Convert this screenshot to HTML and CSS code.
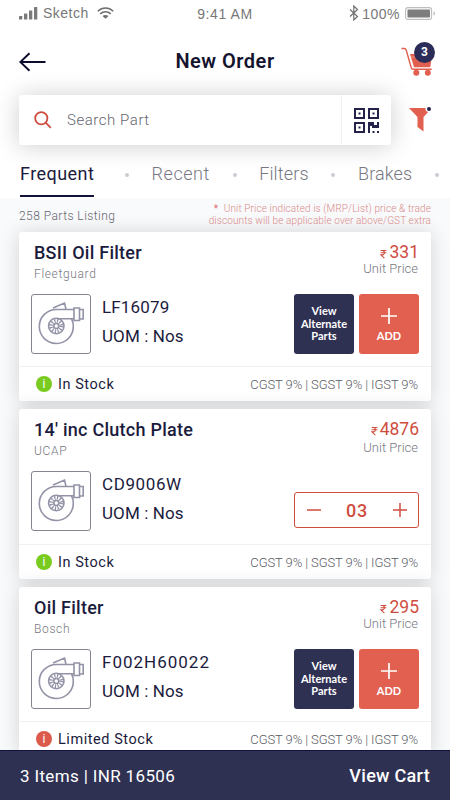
FILE: index.html
```html
<!DOCTYPE html>
<html lang="en">
<head>
  <meta charset="UTF-8">
  <title>New Order</title>
  <link rel="stylesheet" href="styles.css">
</head>
<body>
  <!-- shared icons -->
  <svg class="sprite" width="0" height="0">
    <symbol id="turbo" viewBox="0 0 60 60">
      <g fill="none" stroke="#9293a6" stroke-width="1.6">
        <path d="M43 15.500H25.500A17 17 0 1 0 42.300 32c0-2.600-.500-4.800-1.700-7M26 24.700h17"/>
        <path d="M43 14h5.500v12.500H43zM48.500 15.500h3.700v9.500h-3.700zM22 14l11.500-5 1.500 6.300"/>
        <circle cx="25.300" cy="32" r="7.700"/>
        <circle cx="25.300" cy="32" r="2.500"/>
        <circle cx="25.300" cy="32" r="5" stroke-width="4" stroke-dasharray="1.200 1.418"/>
      </g>
    </symbol>
    <symbol id="plus" viewBox="0 0 16 16">
      <path d="M8 0v16M0 8h16" fill="none" stroke="currentColor" stroke-width="1.700"/>
    </symbol>
    <symbol id="rupee" viewBox="0 0 8 10">
      <path d="M.7 1h6.600M.7 3.500h6.600M1 1h1.500c3.400 0 3.400 5 0 5H1l4 3.700" fill="none" stroke="currentColor" stroke-width="1.200"/>
    </symbol>
  </svg>

  <div class="screen">
    <div class="status-bar">
      <div class="status-left">
        <svg width="19" height="13" viewBox="0 0 19 13" fill="#7b7b7b">
          <rect x="0" y="9" width="3.300" height="3.500" rx=".5"/>
          <rect x="5" y="6.500" width="3.300" height="6" rx=".5"/>
          <rect x="10" y="3.500" width="3.300" height="9" rx=".5"/>
          <rect x="15" y="0" width="3.300" height="12.500" rx=".5"/>
        </svg>
        <span class="carrier">Sketch</span>
        <svg width="17" height="12" viewBox="0 0 17 12">
          <g fill="none" stroke="#6f6f6f" stroke-width="1.600">
            <path d="M.8 4.200c4.400-4.300 11-4.300 15.400 0M3.300 6.900c3-2.900 7.400-2.900 10.400 0"/>
          </g>
          <path d="M5.500 9.100c1.700-1.600 4.300-1.600 6 0l-3 2.700z" fill="#6f6f6f"/>
        </svg>
      </div>
      <div class="status-time">9:41 AM</div>
      <div class="status-right">
        <svg width="10" height="16" viewBox="0 0 10 16">
          <path d="M1 4.500l7.500 7L4.800 15V1l3.700 3.500-7.500 7" fill="none" stroke="#707070" stroke-width="1.200"/>
        </svg>
        <span class="percent">100%</span>
        <svg width="31" height="13" viewBox="0 0 31 13">
          <rect x=".6" y=".6" width="26" height="11.800" rx="2.500" fill="none" stroke="#bdbdbd" stroke-width="1.100"/>
          <rect x="2.500" y="2.500" width="22.500" height="8" rx=".8" fill="#7d7d7d"/>
          <path d="M28.500 4.500c2 .6 2 3.400 0 4z" fill="#bdbdbd"/>
        </svg>
      </div>
    </div>

    <div class="header">
      <svg class="back" width="28" height="20" viewBox="0 0 28 20">
        <path d="M26.500 10H1.500M10.500 1.200L1.300 10l9.200 8.800" fill="none" stroke="#0b0b2c" stroke-width="1.900"/>
      </svg>
      <h1>New Order</h1>
      <div class="cart">
        <svg width="33" height="30" viewBox="0 0 33 30">
          <path d="M.5 1.500h3c1 0 1.400.5 1.700 1.500l5 17.500c.3 1.300.8 1.800 2 1.800h18.500" fill="none" stroke="#e2604f" stroke-width="1.400"/>
          <path d="M9 7h22l-1.500 12c-.2 1-.7 1.300-1.500 1.300H13z" fill="#e2604f"/>
          <path d="M10 10h20" stroke="#f6c3bb" stroke-width=".6"/>
          <circle cx="15.300" cy="25.700" r="3" fill="#e2604f"/>
          <circle cx="26.800" cy="25.700" r="3" fill="#e2604f"/>
        </svg>
        <span class="badge">3</span>
      </div>
    </div>

    <div class="search-row">
      <div class="search">
        <svg class="magnifier" width="18" height="18" viewBox="0 0 18 18">
          <g fill="none" stroke="#cf4d3f" stroke-width="1.800">
            <circle cx="7.300" cy="7.300" r="6.100"/>
            <path d="M11.700 11.700l5.100 5.100"/>
          </g>
        </svg>
        <span class="placeholder">Search Part</span>
        <div class="scan">
          <svg width="25" height="25" viewBox="0 0 25 25">
            <g fill="none" stroke="#23224a" stroke-width="2">
              <path d="M1 1h9v9H1zM15 1h9v9h-9zM1 15h9v9H1z"/>
            </g>
            <path d="M4.500 4.500h2v2h-2zM18.500 4.500h2v2h-2zM4.500 18.500h2v2h-2zM14 14h6v3h3v-3h2v6h-7v-2h-2v7h-2zM18.500 23h2v2h-2zM23 23h2v2h-2z" fill="#23224a"/>
          </svg>
        </div>
      </div>
      <svg class="filter" width="23" height="26" viewBox="0 0 23 26">
        <path d="M0 2h16.500a3.600 3.600 0 0 0 2.700 4L14.500 11v14.500L8.500 21V11z" fill="#e2604f"/>
        <circle cx="20" cy="3" r="2" fill="#23224a"/>
      </svg>
    </div>

    <div class="tabs">
      <span class="tab active">Frequent</span>
      <i class="dot"></i>
      <span class="tab">Recent</span>
      <i class="dot"></i>
      <span class="tab tight">Filters</span>
      <i class="dot"></i>
      <span class="tab tight">Brakes</span>
      <i class="dot"></i>
    </div>

    <div class="listing">
      <div class="listing-info">
        <div class="count">258 Parts Listing</div>
        <div class="note">
          <b>*</b> Unit Price indicated is (MRP/List) price &amp; trade<br>
          discounts will be applicable over above/GST extra
        </div>
      </div>

      <div class="card">
        <div class="card-head">
          <div>
            <h2>BSII Oil Filter</h2>
            <div class="brand">Fleetguard</div>
          </div>
          <div class="price">
            <div class="amount"><svg width="7" height="10"><use href="#rupee"/></svg>331</div>
            <div class="unit">Unit Price</div>
          </div>
        </div>
        <div class="card-body">
          <div class="thumb"><svg width="60" height="60"><use href="#turbo"/></svg></div>
          <div class="specs">
            <div class="code">LF16079</div>
            <div class="uom">UOM : Nos</div>
          </div>
          <button class="alternate">View<br>Alternate<br>Parts</button>
          <button class="add"><svg width="16" height="16"><use href="#plus"/></svg>ADD</button>
        </div>
        <div class="card-foot">
          <span class="info">i</span>
          <span class="stock">In Stock</span>
          <span class="tax">CGST 9% | SGST 9% | IGST 9%</span>
        </div>
      </div>

      <div class="card in-cart">
        <div class="card-head">
          <div>
            <h2>14' inc Clutch Plate</h2>
            <div class="brand">UCAP</div>
          </div>
          <div class="price">
            <div class="amount"><svg width="7" height="10"><use href="#rupee"/></svg>4876</div>
            <div class="unit">Unit Price</div>
          </div>
        </div>
        <div class="card-body">
          <div class="thumb"><svg width="60" height="60"><use href="#turbo"/></svg></div>
          <div class="specs">
            <div class="code wide">CD9006W</div>
            <div class="uom">UOM : Nos</div>
          </div>
          <div class="stepper">
            <svg width="14" height="14" viewBox="0 0 14 14"><path d="M0 7h14" stroke="currentColor" stroke-width="1.500"/></svg>
            <span>03</span>
            <svg width="14" height="14"><use href="#plus"/></svg>
          </div>
        </div>
        <div class="card-foot">
          <span class="info">i</span>
          <span class="stock">In Stock</span>
          <span class="tax">CGST 9% | SGST 9% | IGST 9%</span>
        </div>
      </div>

      <div class="card">
        <div class="card-head">
          <div>
            <h2>Oil Filter</h2>
            <div class="brand">Bosch</div>
          </div>
          <div class="price">
            <div class="amount"><svg width="7" height="10"><use href="#rupee"/></svg>295</div>
            <div class="unit">Unit Price</div>
          </div>
        </div>
        <div class="card-body">
          <div class="thumb"><svg width="60" height="60"><use href="#turbo"/></svg></div>
          <div class="specs">
            <div class="code wider">F002H60022</div>
            <div class="uom">UOM : Nos</div>
          </div>
          <button class="alternate">View<br>Alternate<br>Parts</button>
          <button class="add"><svg width="16" height="16"><use href="#plus"/></svg>ADD</button>
        </div>
        <div class="card-foot">
          <span class="info limited">i</span>
          <span class="stock">Limited Stock</span>
          <span class="tax">CGST 9% | SGST 9% | IGST 9%</span>
        </div>
      </div>
    </div>

    <div class="cart-bar">
      <span class="summary">3 Items | INR 16506</span>
      <span class="view-cart">View Cart</span>
    </div>
  </div>
</body>
</html>
```

FILE: styles.css
```css
* {
  box-sizing: border-box;
}
body {
  margin: 0;
  font-family: Roboto, "Liberation Sans", sans-serif;
  color: #1b1b3d;
  background: #fff;
}
h1,
h2 {
  margin: 0;
  font-weight: 500;
}
svg {
  display: block;
  flex: none;
}
.sprite {
  position: absolute;
}
.screen {
  width: 450px;
  height: 800px;
  overflow: hidden;
  display: flex;
  flex-direction: column;
  white-space: nowrap;
}

/* status bar */
.status-bar {
  height: 28px;
  flex: none;
  padding: 0 14px 0 19px;
  display: grid;
  grid-template-columns: 1fr auto 1fr;
  align-items: center;
  font-family: "Liberation Sans", Arial, sans-serif;
  font-size: 14px;
  line-height: 16px;
  color: #777;
}
.status-left,
.status-right {
  display: flex;
  align-items: center;
  height: 26px;
}
.status-left {
  align-self: start;
}
.carrier {
  margin: 0 8px 0 5px;
  letter-spacing: 0.5px;
}
.status-time {
  margin-right: 5px;
  letter-spacing: 0.6px;
}
.status-right {
  justify-content: flex-end;
  align-self: start;
}
.percent {
  margin: 2px 5px 0 3px;
  letter-spacing: 0.5px;
}

/* header */
.header {
  height: 67px;
  flex: none;
  padding: 0 15px 0 19px;
  display: grid;
  grid-template-columns: 1fr auto 1fr;
  align-items: center;
}
.header h1 {
  margin: 0 4px 2px 0;
  font-size: 20px;
  line-height: 24px;
  font-weight: 600;
  letter-spacing: 0.5px;
  color: #14142f;
}
.cart {
  position: relative;
  justify-self: end;
  width: 34px;
  height: 30px;
}
.badge {
  position: absolute;
  top: -5px;
  right: 0;
  width: 21px;
  height: 21px;
  border-radius: 50%;
  background: #2b2c58;
  color: #fff;
  font-size: 12px;
  font-weight: 700;
  line-height: 21px;
  text-align: center;
}

/* search */
.search-row {
  height: 50px;
  flex: none;
  padding-left: 19px;
  display: flex;
}
.search {
  width: 372px;
  display: flex;
  align-items: center;
  padding-left: 15px;
  background: #fff;
  border-radius: 3px;
  box-shadow: 0 1px 24px rgba(0, 0, 0, 0.2);
}
.placeholder {
  margin-left: 15px;
  font-size: 15px;
  letter-spacing: 0.55px;
  font-weight: 300;
  color: #65656e;
}
.scan {
  margin-left: auto;
  width: 50px;
  height: 50px;
  padding: 13px 0 0 12px;
  border-left: 1px solid #f1f1f3;
}
.filter {
  margin: 11px 0 0 18px;
}

/* tabs */
.tabs {
  height: 53px;
  flex: none;
  padding: 13px 11px 0 20px;
  display: flex;
  justify-content: space-between;
  font-size: 18px;
  line-height: 32px;
}
.tab {
  font-weight: 300;
  color: #777781;
  letter-spacing: 0.55px;
}
.tab.tight {
  letter-spacing: 0.15px;
}
.tab.active {
  height: 39px;
  margin-right: 8px;
  font-weight: 400;
  letter-spacing: 0.45px;
  color: #1b1b3d;
  border-bottom: 2px solid #12123a;
}
.dot {
  width: 4px;
  height: 4px;
  margin-top: 15px;
  border-radius: 50%;
  background: #ccccd2;
}

/* listing */
.listing {
  flex: 1;
  min-height: 0;
  overflow: hidden;
  padding: 0 19px;
  background: #f9fafc;
}
.listing-info {
  height: 34px;
  display: flex;
  justify-content: space-between;
}
.count {
  padding-top: 10px;
  font-size: 12px;
  line-height: 16px;
  font-weight: 300;
  letter-spacing: 0.45px;
  color: #66666f;
}
.note {
  padding-top: 5px;
  text-align: right;
  font-size: 10px;
  line-height: 11.500px;
  font-weight: 300;
  letter-spacing: 0.12px;
  color: #d98b88;
}
.note b {
  margin-right: 3px;
  color: #d8706c;
}

/* part cards */
.card {
  height: 169px;
  margin-bottom: 8px;
  background: #fff;
  border-radius: 3px;
  box-shadow: 0 1px 20px rgba(0, 0, 0, 0.16);
}
.card.in-cart {
  height: 170px;
}
.card-head {
  height: 62px;
  padding: 10px 12px 0 15px;
  display: flex;
  justify-content: space-between;
}
.card h2 {
  font-size: 18px;
  line-height: 21px;
  letter-spacing: 0.25px;
}
.brand {
  margin-top: 3px;
  font-size: 12px;
  line-height: 16px;
  font-weight: 300;
  letter-spacing: 0.65px;
  color: #777781;
}
.price {
  text-align: right;
}
.amount {
  display: flex;
  justify-content: flex-end;
  align-items: center;
  gap: 2px;
  font-size: 17.500px;
  line-height: 21px;
  color: #cf4d3f;
}
.amount svg {
  margin-top: 2px;
}
.unit {
  margin: -2px 1px 0 0;
  font-size: 13px;
  line-height: 16px;
  font-weight: 300;
  color: #777781;
}
.in-cart .unit {
  margin-top: 0;
}
.card-body {
  height: 72px;
  padding: 0 12px;
  display: flex;
}
.in-cart .card-body {
  height: 73px;
}
.thumb {
  width: 60px;
  height: 60px;
  border: 1px solid #85858f;
  border-radius: 3px;
}
.thumb svg {
  margin: -1px;
}
.specs {
  margin: -1px auto 0 11px;
  font-size: 17px;
  line-height: 29px;
}
.code {
  letter-spacing: 0.15px;
}
.code.wide {
  letter-spacing: 0.6px;
}
.code.wider {
  letter-spacing: 1px;
}
.uom {
  letter-spacing: 0.1px;
}
button {
  width: 60px;
  height: 60px;
  padding: 0;
  border: none;
  border-radius: 3px;
  font-family: Lato, sans-serif;
  font-size: 11px;
  font-weight: 700;
  color: #fff;
}
.alternate {
  margin-right: 5px;
  background: #2f3153;
  line-height: 12.500px;
}
.add {
  display: flex;
  flex-direction: column;
  align-items: center;
  padding-top: 14px;
  gap: 5px;
  background: #e2604f;
}
.stepper {
  width: 125px;
  height: 36px;
  margin-top: 21px;
  padding: 0 11px 0 12px;
  display: flex;
  align-items: center;
  justify-content: space-between;
  border: 1px solid #cf4d3f;
  border-radius: 3px;
  font-size: 18px;
  font-weight: 500;
  letter-spacing: 0.8px;
  color: #cf4d3f;
}
.card-foot {
  height: 35px;
  padding: 0 13px 0 17px;
  display: flex;
  align-items: center;
  border-top: 1px solid #f1f1f3;
}
.info {
  width: 16px;
  height: 16px;
  border-radius: 50%;
  background: #7acb20;
  color: #fff;
  font-size: 12px;
  line-height: 16px;
  text-align: center;
}
.info.limited {
  background: #dc5a4b;
}
.stock {
  margin-left: 6px;
  font-size: 14.500px;
  letter-spacing: 0.55px;
}
.tax {
  margin-left: auto;
  font-size: 13px;
  font-weight: 300;
  letter-spacing: -0.1px;
  color: #5c5c66;
}

/* bottom bar */
.cart-bar {
  height: 50px;
  flex: none;
  padding: 0 20px;
  display: flex;
  align-items: center;
  justify-content: space-between;
  background: #2f3153;
  border-top: 1px solid #12123a;
  color: #fff;
  font-size: 17px;
}
.summary {
  letter-spacing: 0.35px;
}
.view-cart {
  font-size: 18px;
  font-weight: 500;
  letter-spacing: 0.3px;
}
```
